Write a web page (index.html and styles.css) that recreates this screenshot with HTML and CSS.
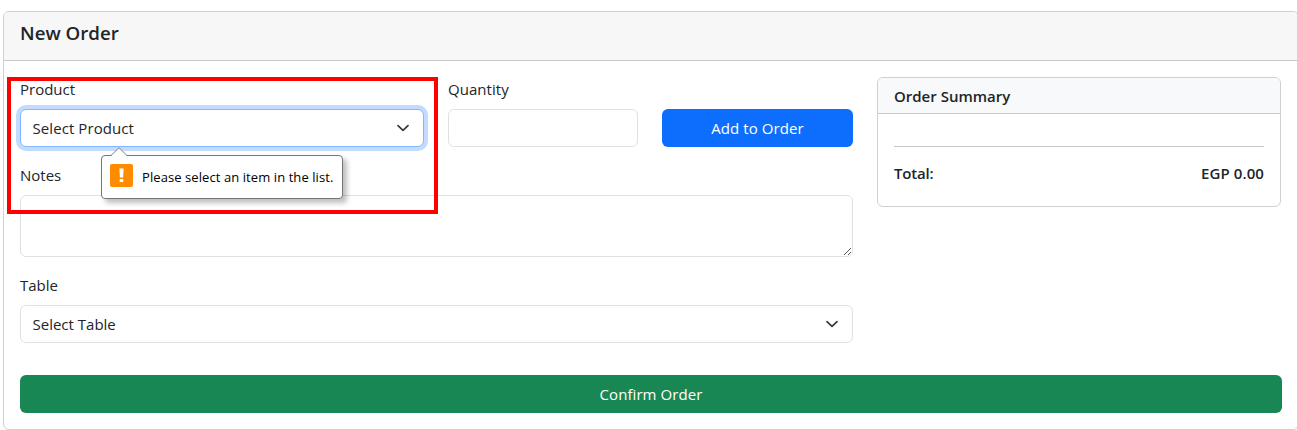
FILE: index.html
```html
<!DOCTYPE html>
<html lang="en">
<head>
<meta charset="utf-8">
<title>New Order</title>
<link rel="stylesheet" href="styles.css">
</head>
<body>
<main class="card order-card">
  <header class="card-header"><h1 class="title">New Order</h1></header>
  <div class="card-body">
    <div class="columns">
      <section class="order-form">
        <div class="item-row">
          <div class="field product">
            <div class="label">Product</div>
            <div class="control select focused"><span class="product-value">Select Product</span>
              <svg class="chevron" viewBox="0 0 16 16"><path d="m3 5.6 5 4.8 5-4.8"/></svg>
            </div>
            <div class="tooltip">
              <svg class="tip-arrow" viewBox="0 0 18 9"><path class="fill" d="M1 9 9 .8 17 9Z"/><path class="line" d="M1 8.5 9 .8l8 7.7"/></svg>
              <svg class="warn" viewBox="0 0 23 23"><rect width="23" height="23" rx="2" fill="#ff8c00"/><path d="M9.4 4.5h4.2l-.5 9h-3.2zM9.7 15h3.6v3H9.7z" fill="#fff"/></svg>
              <span class="tip-text">Please select an item in the list.</span>
            </div>
            <div class="highlight"></div>
          </div>
          <div class="field">
            <div class="label quantity-label">Quantity</div>
            <div class="control"></div>
          </div>
          <button class="btn primary">Add to Order</button>
        </div>
        <div class="field">
          <div class="label">Notes</div>
          <div class="control notes"><svg class="grip" viewBox="0 0 9 9"><path d="M1 8 8 1M5 8l3-3"/></svg></div>
        </div>
        <div class="field">
          <div class="label">Table</div>
          <div class="control select"><span>Select Table</span>
            <svg class="chevron" viewBox="0 0 16 16"><path d="m3 5.6 5 4.8 5-4.8"/></svg>
          </div>
        </div>
      </section>
      <aside class="card summary">
        <header class="summary-header">Order Summary</header>
        <div class="summary-body">
          <hr class="rule">
          <div class="total"><span class="total-label">Total:</span><span class="amount">EGP 0.00</span></div>
        </div>
      </aside>
    </div>
    <button class="btn success">Confirm Order</button>
  </div>
</main>
</body>
</html>
```
FILE: styles.css
```css
* { box-sizing: border-box; }
body {
  margin: 0;
  padding: 11px 0 0 3px;
  overflow: hidden;
  background: #fff;
  color: #212529;
  font: 15px/24px "Segoe UI", "Open Sans", "Noto Sans", sans-serif;
}
.card { border: 1px solid #ced0d2; border-radius: 6px; background: #fff; }
.order-card { width: 1296px; height: 419px; }
.card-header {
  height: 49px;
  padding: 9px 16px;
  background: #f7f7f7;
  border-bottom: 1px solid #c8c9ca;
  border-radius: 5px 5px 0 0;
}
.title { margin: 0; font-size: 18.7px; line-height: 24px; font-weight: 600; white-space: nowrap; }
.card-body { padding: 16px; }
.columns { display: grid; grid-template-columns: 833px 404px; gap: 24px; align-items: start; }
.order-form { display: grid; gap: 16px; }
.item-row { display: grid; grid-template-columns: 404px 190px 191px; gap: 24px; align-items: end; }
.product { position: relative; }
.label { height: 24px; margin-bottom: 8px; white-space: nowrap; }
.quantity-label { letter-spacing: .05px; }
.control { height: 38px; border: 1px solid #dee2e6; border-radius: 6px; background: #fff; }
.select { display: flex; align-items: center; justify-content: space-between; padding: 0 12px 0 11.5px; white-space: nowrap; }
.product-value { letter-spacing: .08px; }
.focused { border-color: #86b7fe; box-shadow: 0 0 0 4px #c2dbfe; }
.chevron { width: 16px; height: 16px; fill: none; stroke: #343a40; stroke-width: 1.7; stroke-linecap: round; stroke-linejoin: round; }
.notes { height: 62px; display: flex; justify-content: flex-end; align-items: flex-end; }
.grip { width: 9px; height: 9px; fill: none; stroke: #444; stroke-width: .9; }
.btn {
  height: 38px;
  padding: 0;
  border: 0;
  border-radius: 6px;
  color: #fff;
  font: inherit;
  letter-spacing: .08px;
  display: flex;
  align-items: center;
  justify-content: center;
}
.primary { background: #0d6efd; }
.success { width: 1262px; margin-top: 32px; background: #198754; }
.summary { height: 130px; }
.summary-header {
  height: 36px;
  padding: 6px 16px 0;
  background: #f8f9fa;
  border-bottom: 1px solid #c8c9ca;
  border-radius: 5px 5px 0 0;
  font-weight: 600;
}
.summary-body { padding: 16px; font-weight: 600; }
.rule { height: 1px; margin: 16px 0 14px; border: 0; background: #c7c8c9; }
.total { display: flex; justify-content: space-between; }
.total-label { letter-spacing: -.2px; }
.amount { letter-spacing: .1px; }

/* Validation bubble anchored under the product select */
.tooltip {
  position: absolute;
  z-index: 2;
  left: 81px;
  top: 78px;
  width: 242px;
  height: 44px;
  padding: 0 8px;
  display: flex;
  align-items: center;
  gap: 9px;
  background: #fff;
  border: 1px solid #767676;
  border-radius: 4px;
  box-shadow: 4px 4px 5px rgba(0, 0, 0, .25);
  color: #000;
  font-size: 13px;
  white-space: nowrap;
}
.tip-text { padding-bottom: 1px; letter-spacing: .08px; }
.tip-arrow { position: absolute; left: 8px; top: -9px; width: 18px; height: 9px; }
.tip-arrow .fill { fill: #fff; }
.tip-arrow .line { fill: none; stroke: #858585; stroke-width: 1; }
.warn { width: 23px; height: 23px; flex: none; margin-top: -3px; }
.highlight {
  position: absolute;
  z-index: 3;
  left: -13px;
  top: 0;
  width: 431px;
  height: 137px;
  border: 4px solid #f00;
  pointer-events: none;
}
```
